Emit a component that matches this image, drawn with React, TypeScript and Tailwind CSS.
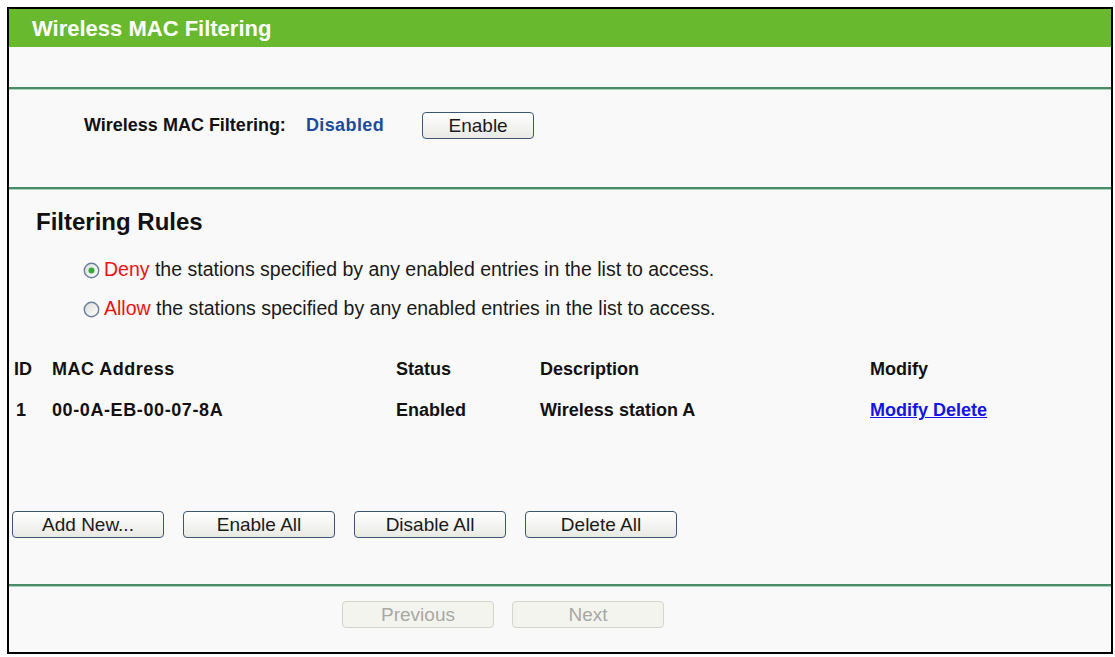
const cols = "grid grid-cols-[38px_344px_144px_330px_1fr] pl-[5px] items-center h-[24px]";

function Btn({ label, w = "w-[152px]", disabled = false }: { label: string; w?: string; disabled?: boolean }) {
  return (
    <button
      disabled={disabled}
      className={
        disabled
          ? `${w} h-[27px] rounded-[4px] border border-[#d4d4cc] bg-[#f4f4ef] text-[19px] text-[#a8a8a4] leading-none`
          : `${w} h-[27px] rounded-[4px] border border-[#3d5675] bg-gradient-to-b from-white to-[#e9e9e4] text-[19px] text-[#1a1a1a] leading-none`
      }
    >
      {label}
    </button>
  );
}

function Radio({ checked }: { checked?: boolean }) {
  return (
    <svg width="17" height="17" viewBox="0 0 17 17" className="shrink-0">
      <defs>
        <linearGradient id="rg" x1="0" y1="0" x2="1" y2="1">
          <stop offset="0" stopColor="#dcdcd8" />
          <stop offset="1" stopColor="#ffffff" />
        </linearGradient>
      </defs>
      <circle cx="8.5" cy="8.5" r="7.2" fill="url(#rg)" stroke="#6a7f9e" strokeWidth="1.4" />
      {checked && <circle cx="8.5" cy="8.5" r="3" fill="#3aa83a" />}
    </svg>
  );
}

function Line() {
  return <div className="h-[2px] bg-[#4b8a68] shadow-[0_1px_0_#a8d5b8]" />;
}

export default function App() {
  return (
    <div className="h-[657px] bg-white pt-[7px] pl-[7px] font-['Liberation_Sans',Arial,sans-serif]">
      <div className="w-[1106px] h-[647px] border-2 border-black bg-[#f9f9f9] flex flex-col">
        <div className="h-[38px] bg-[#68b92e] flex items-center pl-[23px] text-[22px] font-bold text-white">
          Wireless MAC Filtering
        </div>
        <div className="h-[40px]" />
        <Line />

        <div className="h-[98px] pt-[23px]">
          <div className="h-[27px] flex items-center pl-[75px]">
            <span className="text-[18px] font-bold text-[#111]">Wireless MAC Filtering:</span>
            <span className="ml-[20px] text-[18px] font-bold tracking-[0.4px] text-[#1c4b9c]">Disabled</span>
            <div className="ml-[38px]">
              <Btn label="Enable" w="w-[112px]" />
            </div>
          </div>
        </div>
        <Line />

        <div className="pt-[19px] pl-[27px] h-[47px] text-[24px] font-bold leading-[28px] text-[#111]">
          Filtering Rules
        </div>

        <div className="mt-[22px] flex flex-col gap-[15px] pl-[74px] text-[19.5px] text-[#1a1a1a]">
          <div className="h-[24px] flex items-center gap-[4px]">
            <Radio checked />
            <span>
              <span className="text-[#ee1111]">Deny</span> the stations specified by any enabled entries in the list to access.
            </span>
          </div>
          <div className="h-[24px] flex items-center gap-[4px]">
            <Radio />
            <span>
              <span className="text-[#ee1111]">Allow</span> the stations specified by any enabled entries in the list to access.
            </span>
          </div>
        </div>

        <div className="mt-[35px] flex flex-col gap-[17px] text-[18px] font-bold text-[#111]">
          <div className={cols}>
            <span>ID</span>
            <span className="tracking-[0.5px]">MAC Address</span>
            <span>Status</span>
            <span>Description</span>
            <span>Modify</span>
          </div>
          <div className={cols}>
            <span className="pl-[2px]">1</span>
            <span className="tracking-[0.6px]">00-0A-EB-00-07-8A</span>
            <span>Enabled</span>
            <span>Wireless station A</span>
            <span className="text-[#1414e6] underline">
              <a href="#">Modify</a> <a href="#">Delete</a>
            </span>
          </div>
        </div>

        <div className="mt-[90px] flex gap-[19px] pl-[3px]">
          <Btn label="Add New..." />
          <Btn label="Enable All" />
          <Btn label="Disable All" />
          <Btn label="Delete All" />
        </div>

        <div className="mt-[46px]">
          <Line />
        </div>

        <div className="mt-[15px] flex gap-[18px] pl-[333px]">
          <Btn label="Previous" disabled />
          <Btn label="Next" disabled />
        </div>
      </div>
    </div>
  );
}
